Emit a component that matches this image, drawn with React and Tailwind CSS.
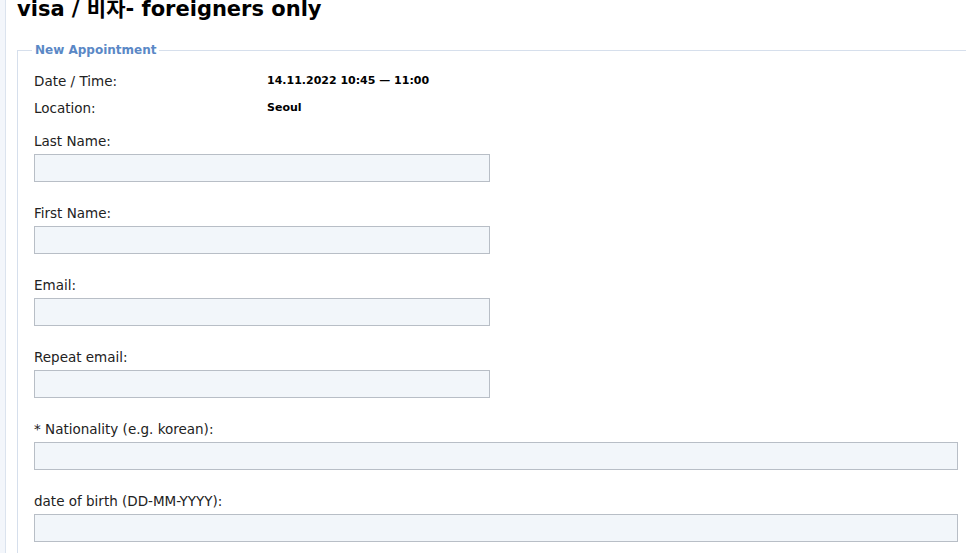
const fields = [
  { label: "Last Name:", wide: false },
  { label: "First Name:", wide: false },
  { label: "Email:", wide: false },
  { label: "Repeat email:", wide: false },
  { label: "* Nationality (e.g. korean):", wide: true },
  { label: "date of birth (DD-MM-YYYY):", wide: true },
];

function Field({ label, wide }) {
  return (
    <div className="mb-[22px]">
      <div className="h-[18px] flex items-center text-[13.5px] text-[#222]">
        {label}
      </div>
      <input
        type="text"
        className={
          "mt-[4px] block h-[28px] bg-[#f2f6fa] border border-[#b8bec6] outline-none " +
          (wide ? "w-[924px]" : "w-[456px]")
        }
      />
    </div>
  );
}

export default function App() {
  return (
    <div
      className="flex min-h-[553px] w-[966px] overflow-hidden bg-white"
      style={{ fontFamily: '"DejaVu Sans", Verdana, "Noto Sans CJK KR", sans-serif' }}
    >
      <div className="w-[6px] shrink-0 bg-[#f3f6fb] border-r border-[#dbe3ee]" />
      <div className="flex-1 pl-[11px]">
        <h1 className="mt-[-4px] h-[26px] leading-[26px] text-[21px] font-bold text-black">
          visa / 비자- foreigners only
        </h1>
        <fieldset className="mt-[20px] w-[980px] border-t border-l border-[#d6dfec] pl-[16px] pt-[10px]">
          <legend className="ml-[-2px] px-[3px] h-[16px] leading-[16px] text-[12px] font-bold text-[#5a88c6]">
            New Appointment
          </legend>
          <div className="flex h-[27px] items-center text-[13.5px] text-[#222]">
            <span className="w-[233px]">Date / Time:</span>
            <span className="text-[11px] font-bold text-black">14.11.2022 10:45 — 11:00</span>
          </div>
          <div className="flex h-[27px] items-center text-[13.5px] text-[#222]">
            <span className="w-[233px]">Location:</span>
            <span className="text-[11px] font-bold text-black">Seoul</span>
          </div>
          <div className="mt-[10px]">
            {fields.map((f, i) => (
              <Field key={i} label={f.label} wide={f.wide} />
            ))}
          </div>
        </fieldset>
      </div>
    </div>
  );
}
